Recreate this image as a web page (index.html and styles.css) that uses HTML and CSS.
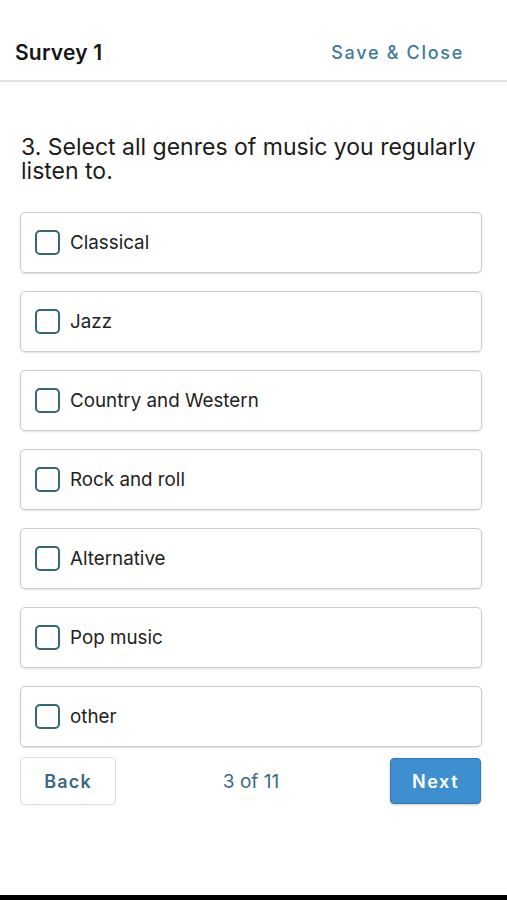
FILE: index.html
```html
<!DOCTYPE html>
<html>
<head>
<meta charset="utf-8">
<link rel="stylesheet" href="styles.css">
</head>
<body>
<div class="page">
  <header class="header">
    <div class="title">Survey 1</div>
    <div class="save">Save &amp; Close</div>
  </header>
  <main class="content">
    <h1 class="question">3. Select all genres of music you regularly listen to.</h1>
    <div class="options">
      <label class="option"><span class="box"></span><span class="label">Classical</span></label>
      <label class="option"><span class="box"></span><span class="label">Jazz</span></label>
      <label class="option"><span class="box"></span><span class="label">Country and Western</span></label>
      <label class="option"><span class="box"></span><span class="label">Rock and roll</span></label>
      <label class="option"><span class="box"></span><span class="label">Alternative</span></label>
      <label class="option"><span class="box"></span><span class="label">Pop music</span></label>
      <label class="option"><span class="box"></span><span class="label">other</span></label>
    </div>
    <div class="nav">
      <button class="btn back">Back</button>
      <div class="progress">3 of 11</div>
      <button class="btn next">Next</button>
    </div>
  </main>
  <div class="spacer"></div>
  <div class="bottom-bar"></div>
</div>
</body>
</html>
```
FILE: styles.css
```css
* { box-sizing: border-box; }
html, body { margin: 0; padding: 0; background: #fff; }
body {
  font-family: Inter, "Liberation Sans", Arial, sans-serif;
  color: #1e1e1e;
}
.page {
  height: 900px;
  display: flex;
  flex-direction: column;
}
.header {
  height: 82px;
  padding: 24px 43px 0 15px;
  display: flex;
  justify-content: space-between;
  align-items: flex-start;
  border-bottom: 2px solid #e3e3e3;
}
.title {
  font-size: 21px;
  font-weight: 600;
  letter-spacing: 0.2px;
  line-height: 57px;
  height: 57px;
  color: #161616;
}
.save {
  font-size: 18px;
  font-weight: 500;
  letter-spacing: 1.7px;
  color: #3e7c94;
  line-height: 57px;
  height: 57px;
}
.content {
  padding: 0 25px 0 20px;
}
.question {
  margin: 53px 0 29px 1px;
  font-size: 23px;
  font-weight: normal;
  line-height: 24px;
  color: #1c1c1c;
}
.options {
  display: flex;
  flex-direction: column;
  gap: 18px;
}
.option {
  height: 61px;
  border: 1px solid #cbcbcb;
  border-radius: 5px;
  box-shadow: 0 1px 2px rgba(0,0,0,0.12);
  display: flex;
  align-items: center;
  padding-left: 14px;
  gap: 10px;
}
.box {
  width: 25px;
  height: 25px;
  border: 2px solid #34677c;
  border-radius: 5px;
  flex: none;
}
.label {
  font-size: 18.8px;
  color: #222;
}
.nav {
  margin-top: 10px;
  display: flex;
  align-items: center;
  justify-content: space-between;
  padding-right: 1px;
}
.btn {
  font-family: Inter, "Liberation Sans", Arial, sans-serif;
  font-size: 18px;
  font-weight: 600;
  letter-spacing: 1.2px;
  border-radius: 4px;
  cursor: pointer;
}
.back {
  width: 96px;
  height: 48px;
  background: #fff;
  border: 1px solid #dedede;
  color: #3a6a82;
}
.progress {
  font-size: 19px;
  color: #3b6a82;
  margin-right: 4px;
}
.next {
  width: 91px;
  height: 46px;
  background: #3d8fd0;
  border: 1px solid #2f78b3;
  color: #fff;
  letter-spacing: 1.6px;
  box-shadow: 0 1px 3px rgba(0,0,0,0.2);
}
.spacer { flex: 1; }
.bottom-bar {
  height: 5px;
  background: #000;
  flex: none;
}
```
